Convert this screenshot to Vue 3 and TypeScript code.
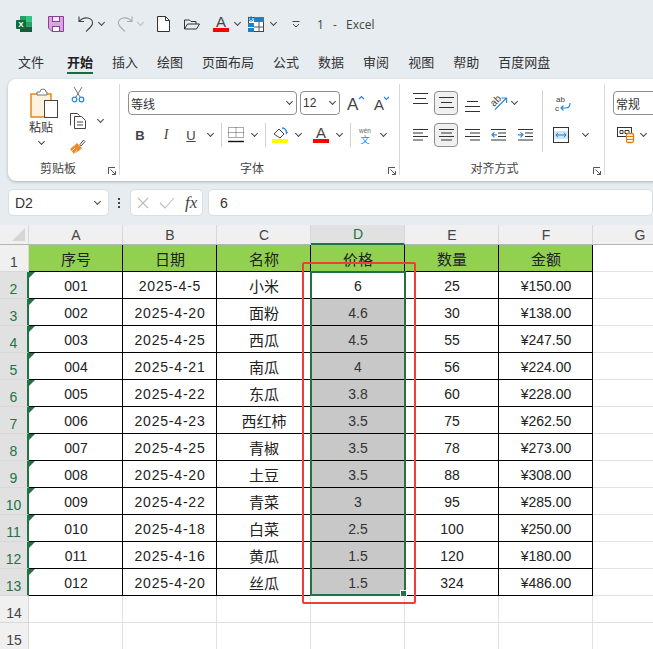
<script setup lang="ts">
interface Row {
  no: string
  date: string
  name: string
  price: string
  qty: string
  total: string
}

const columns = ['A', 'B', 'C', 'D', 'E', 'F', 'G']
const titles = ['序号', '日期', '名称', '价格', '数量', '金额']

const rows: Row[] = [
  { no: '001', date: '2025-4-5', name: '小米', price: '6', qty: '25', total: '¥150.00' },
  { no: '002', date: '2025-4-20', name: '面粉', price: '4.6', qty: '30', total: '¥138.00' },
  { no: '003', date: '2025-4-25', name: '西瓜', price: '4.5', qty: '55', total: '¥247.50' },
  { no: '004', date: '2025-4-21', name: '南瓜', price: '4', qty: '56', total: '¥224.00' },
  { no: '005', date: '2025-4-22', name: '东瓜', price: '3.8', qty: '60', total: '¥228.00' },
  { no: '006', date: '2025-4-23', name: '西红柿', price: '3.5', qty: '75', total: '¥262.50' },
  { no: '007', date: '2025-4-25', name: '青椒', price: '3.5', qty: '78', total: '¥273.00' },
  { no: '008', date: '2025-4-20', name: '土豆', price: '3.5', qty: '88', total: '¥308.00' },
  { no: '009', date: '2025-4-22', name: '青菜', price: '3', qty: '95', total: '¥285.00' },
  { no: '010', date: '2025-4-18', name: '白菜', price: '2.5', qty: '100', total: '¥250.00' },
  { no: '011', date: '2025-4-16', name: '黄瓜', price: '1.5', qty: '120', total: '¥180.00' },
  { no: '012', date: '2025-4-20', name: '丝瓜', price: '1.5', qty: '324', total: '¥486.00' },
]

const tabs = ['文件', '开始', '插入', '绘图', '页面布局', '公式', '数据', '审阅', '视图', '帮助', '百度网盘']
</script>

<template>
  <div class="app">
    <!-- 快速访问工具栏 -->
    <header class="qat">
      <svg class="i16" viewBox="0 0 16 16">
        <rect x="4" y="0" width="6" height="5.4" fill="#21a366" />
        <rect x="10" y="0" width="6" height="5.4" fill="#33c481" />
        <rect x="4" y="5.4" width="6" height="5.3" fill="#107c41" />
        <rect x="10" y="5.4" width="6" height="5.3" fill="#21a366" />
        <rect x="4" y="10.7" width="12" height="5.3" fill="#185c37" />
        <rect x="0" y="4" width="10" height="9" rx="1" fill="#0f6b3a" />
        <text x="5" y="11.2" text-anchor="middle" class="logo-x">X</text>
      </svg>
      <svg class="i16 ml16" viewBox="0 0 16 16">
        <path d="M.5.5h15v15H4L.5 12z" fill="#d9a5de" stroke="#8c3f98" />
        <rect x="4.5" y=".5" width="7" height="5" fill="#f6e8f7" stroke="#8c3f98" />
        <rect x="4.5" y="10.5" width="7" height="5" fill="#fff" stroke="#8c3f98" />
      </svg>
      <svg class="i16 ml14" viewBox="0 0 16 16" fill="none" stroke="#444" stroke-width="1.1">
        <path d="M1 .5v5h5M1 5.5C3.5 2.5 6.5 1.5 10 2c3.5.7 5.2 3.4 4.4 6-.7 2.4-3.400 4.800-6.400 7.500" />
      </svg>
      <i class="chev ml3"></i>
      <svg class="i16 ml12" viewBox="0 0 16 16" fill="none" stroke="#aaa" stroke-width="1.1">
        <path d="M15 .5v5h-5M15 5.500C12.500 2.500 9.500 1.500 6 2c-3.500.7-5.200 3.400-4.400 6 .7 2.400 3.400 4.800 6.400 7.500" />
      </svg>
      <i class="chev chev-light ml3"></i>
      <svg class="doc ml13" viewBox="0 0 13 16" fill="#fff" stroke="#333">
        <path d="M.5.500h8l4 4v11H.5z" />
        <path d="M8.500.500v4h4" fill="none" />
      </svg>
      <svg class="i16 ml14" viewBox="0 0 16 16" fill="none" stroke="#333">
        <path d="M.5 13V4h5l1.500 1.500h5V8" />
        <path d="M.5 13l3-5h12l-3 5z" />
      </svg>
      <svg class="i16 ml13" viewBox="0 0 16 16">
        <text x="8" y="11" text-anchor="middle" class="glyph-a">A</text>
        <rect x="0" y="12" width="16" height="4" fill="#f00" />
      </svg>
      <i class="chev ml4"></i>
      <svg class="i16 ml7" viewBox="0 0 16 16">
        <rect x=".5" y="1.500" width="15" height="14" fill="#fff" stroke="#444" />
        <rect x="0" y="7" width="6" height="9" fill="#1f7fc4" />
        <rect x="6" y="1" width="10" height="5" fill="#1f7fc4" />
        <path d="M6 11h10M11 6v10" stroke="#555" />
        <path d="M0 11.500h6" stroke="#fff" />
        <path d="M3 0v6M0 3h6M.8 .8l4.400 4.400M5.200 .8L.8 5.200" stroke="#1f7fc4" stroke-width=".9" />
      </svg>
      <i class="chev ml5"></i>
      <svg class="qat-more" viewBox="0 0 8 8" fill="none" stroke="#444">
        <path d="M.5 1.500h7M1 4l3 3 3-3" />
      </svg>
      <span class="doc-title">1 - Excel</span>
    </header>

    <nav class="tabs">
      <span v-for="tab in tabs" :key="tab" class="tab" :class="{ active: tab === '开始' }">{{ tab }}</span>
    </nav>

    <!-- 功能区 -->
    <section class="ribbon">
      <div class="group clip">
        <div class="clip-body">
          <div class="paste">
            <svg class="paste-icon" viewBox="0 0 28 32">
              <path d="M1 7h20v23H1z" fill="#fdf2df" stroke="#e38a16" stroke-width="1.500" />
              <path d="M7 7V5h3a3 3 0 0 1 6 0h1v3H7z" fill="#fff" stroke="#777" />
              <rect x="14.500" y="13.500" width="13" height="17" fill="#fff" stroke="#444" />
            </svg>
            <span class="paste-label">粘贴</span>
            <i class="chev"></i>
          </div>
          <div class="clip-tools">
            <svg class="i16" viewBox="0 0 16 16" fill="none">
              <path d="M4 0l6 10M12 0L6 10" stroke="#777" />
              <circle cx="4.500" cy="12.500" r="2.300" stroke="#2b88d8" stroke-width="1.200" />
              <circle cx="11.500" cy="12.500" r="2.300" stroke="#2b88d8" stroke-width="1.200" />
            </svg>
            <div class="copy-row">
              <svg class="i16" viewBox="0 0 16 16" fill="#fff" stroke="#444">
                <path d="M.5 12.500V.5h7l2 2" />
                <path d="M4.500 3.500h7l4 4v8h-11z" />
                <path d="M7 9h6M7 12h6" />
              </svg>
              <i class="chev ml10"></i>
            </div>
            <svg class="i16" viewBox="0 0 16 16">
              <path d="M10 5.500l3.500-4.500 1.500 1.500-4 4.500z" fill="#fff" stroke="#555" />
              <path d="M7 4l5 5-2 2-6 4-4-5 5-4z" fill="#ed8a2a" />
              <path d="M4 15l3-4M1.500 12.500L5 9" stroke="#fff" stroke-width=".7" />
            </svg>
          </div>
        </div>
        <footer class="group-foot">
          <span class="group-name">剪贴板</span>
          <svg class="launcher" viewBox="0 0 8 8" fill="none" stroke="#555">
            <path d="M.5 7V.5H7M2.500 2.500l5 5M4 7.500h3.500V4" />
          </svg>
        </footer>
      </div>

      <div class="group font-group">
        <div class="tool-row">
          <div class="select font-name"><span>等线</span><i class="chev"></i></div>
          <div class="select font-size ml3"><span>12</span><i class="chev"></i></div>
          <svg class="grow-icon ml7" viewBox="0 0 18 16">
            <text x="0" y="15" class="glyph-grow">A</text>
            <path d="M12 4l2.500-2.500L17 4" fill="none" stroke="#2b88d8" stroke-width="1.200" />
          </svg>
          <svg class="grow-icon ml9" viewBox="0 0 18 16">
            <text x="0" y="15" class="glyph-shrink">A</text>
            <path d="M10 2l2.500 2.500L15 2" fill="none" stroke="#2b88d8" stroke-width="1.200" />
          </svg>
        </div>
        <div class="tool-row row-two">
          <span class="fmt fmt-b ml6">B</span>
          <span class="fmt fmt-i ml14">I</span>
          <span class="fmt fmt-u ml13">U</span>
          <i class="chev ml9"></i>
          <span class="vline ml7"></span>
          <svg class="i16 ml6" viewBox="0 0 16 16" fill="none" stroke="#555">
            <path d="M.5.500h15v10H.5zM8 .5v10M.5 5.500h15" stroke-dasharray="1 1" />
            <path d="M0 14.500h16" stroke="#111" stroke-width="1.400" />
          </svg>
          <i class="chev ml6"></i>
          <span class="vline ml7"></span>
          <svg class="i16 ml6" viewBox="0 0 16 16">
            <path d="M2 7l5-5 5 5-4 4z" fill="#fff" stroke="#444" />
            <path d="M10 1c3 0 4.500 2 4.500 5l1-1" fill="none" stroke="#2b88d8" stroke-width="1.400" />
            <rect x="0" y="12" width="16" height="4" fill="#ff0" />
          </svg>
          <i class="chev ml6"></i>
          <svg class="i16 ml11" viewBox="0 0 16 16">
            <text x="8" y="11" text-anchor="middle" class="glyph-a">A</text>
            <rect x="0" y="12" width="16" height="4" fill="#f00" />
          </svg>
          <i class="chev ml6"></i>
          <span class="vline ml7"></span>
          <svg class="wen ml7" viewBox="0 0 14 16">
            <text x="7" y="5.500" text-anchor="middle" class="glyph-wen">wén</text>
            <text x="7" y="16" text-anchor="middle" class="glyph-wenzi">文</text>
          </svg>
          <i class="chev ml7"></i>
        </div>
        <footer class="group-foot">
          <span class="group-name">字体</span>
          <svg class="launcher" viewBox="0 0 8 8" fill="none" stroke="#555">
            <path d="M.5 7V.5H7M2.500 2.500l5 5M4 7.500h3.500V4" />
          </svg>
        </footer>
      </div>

      <div class="group align-group">
        <div class="tool-row">
          <svg class="lines lines-top" viewBox="0 0 15 12" stroke="#333"><path d="M0 .5h15M2 5.500h11M0 10.500h15" /></svg>
          <span class="pressed ml6">
            <svg class="lines" viewBox="0 0 15 12" stroke="#333"><path d="M0 .5h15M2 5.500h11M0 10.500h15" /></svg>
          </span>
          <svg class="lines lines-bottom ml7" viewBox="0 0 15 12" stroke="#333"><path d="M2 .5h11M0 5.500h15M0 10.500h15" /></svg>
          <svg class="orient ml10" viewBox="0 0 18 18" fill="none">
            <path d="M5 15.500L16 4.500M11.500 4H16.500V9" stroke="#2b88d8" stroke-width="1.100" />
            <text x="4" y="13" transform="rotate(-45 4 13)" class="glyph-orient">ab</text>
          </svg>
          <i class="chev ml2"></i>
          <span class="vline vline-tall ml24"></span>
          <svg class="wrap ml12" viewBox="0 0 16 16" fill="none">
            <text x="1" y="6.500" class="glyph-wrap">ab</text>
            <text x="0" y="16" class="glyph-wrap">c</text>
            <path d="M15 8c0 3-1.500 5-4 5H6M8.500 10.500L6 13l2.500 2.500" stroke="#2b88d8" stroke-width="1.200" />
          </svg>
        </div>
        <div class="tool-row row-two">
          <svg class="lines" viewBox="0 0 15 12" stroke="#333"><path d="M0 .5h15M0 4h10M0 7.500h15M0 11h10" /></svg>
          <span class="pressed ml6">
            <svg class="lines" viewBox="0 0 15 12" stroke="#333"><path d="M0 .5h15M2 4h11M0 7.500h15M2 11h11" /></svg>
          </span>
          <svg class="lines ml7" viewBox="0 0 15 12" stroke="#333"><path d="M0 .5h15M5 4h10M0 7.500h15M5 11h10" /></svg>
          <svg class="lines ml11" viewBox="0 0 15 12" fill="none" stroke="#333">
            <path d="M0 .5h15M7 4h8M7 7.500h8M0 11h15" />
            <path d="M6 5.800H1M3.500 3.300L1 5.800l2.500 2.500" stroke="#2b88d8" stroke-width="1.200" />
          </svg>
          <svg class="lines ml12" viewBox="0 0 15 12" fill="none" stroke="#333">
            <path d="M0 .5h15M7 4h8M7 7.500h8M0 11h15" />
            <path d="M0 5.800h5M2.500 3.300L5 5.800 2.500 8.300" stroke="#2b88d8" stroke-width="1.200" />
          </svg>
          <svg class="i16 ml20" viewBox="0 0 16 16" fill="none">
            <rect x=".5" y=".5" width="15" height="15" stroke="#333" />
            <rect x="1" y="4" width="14" height="8" fill="#cfe6f7" />
            <path d="M3 8h10M5 5.800L3 8l2 2.200M11 5.800L13 8l-2 2.200" stroke="#1f7fc4" />
          </svg>
          <i class="chev ml12"></i>
        </div>
        <footer class="group-foot">
          <span class="group-name">对齐方式</span>
          <svg class="launcher" viewBox="0 0 8 8" fill="none" stroke="#555">
            <path d="M.5 7V.5H7M2.500 2.500l5 5M4 7.500h3.500V4" />
          </svg>
        </footer>
      </div>

      <div class="number-group">
        <div class="select number-format"><span>常规</span></div>
        <div class="tool-row row-two">
          <svg class="cond ml4" viewBox="0 0 18 16" fill="none">
            <rect x=".5" y=".5" width="14" height="9" fill="#fff" stroke="#333" />
            <path d="M3 3.500h3v3H3zM8 3.500h4v3H8z" stroke="#333" />
            <rect x="9.500" y="6.500" width="7" height="9" rx="1.500" fill="#fff" stroke="#e07b16" stroke-width="1.300" />
            <path d="M9.500 9.500h7M9.500 12.500h7" stroke="#e07b16" />
          </svg>
          <i class="chev ml4"></i>
        </div>
      </div>
    </section>

    <!-- 编辑栏 -->
    <section class="formula-bar">
      <div class="fbox name-box"><span>D2</span><i class="chev"></i></div>
      <span class="dots"><b></b><b></b><b></b></span>
      <div class="fbox fx-box">
        <svg class="fx-x" viewBox="0 0 12 12" fill="none" stroke="#bbb" stroke-width="1.100"><path d="M1 1l10 10M11 1L1 11" /></svg>
        <svg class="fx-check" viewBox="0 0 16 12" fill="none" stroke="#bbb" stroke-width="1.100"><path d="M1 6l5 5 9-10" /></svg>
        <span class="fx-text">fx</span>
      </div>
      <div class="fbox value-box">6</div>
    </section>

    <!-- 工作表 -->
    <section class="sheet">
      <div class="grid">
        <div class="corner">
          <svg class="corner-mark" viewBox="0 0 13 13"><path d="M13 0v13H0z" fill="#d6d6d6" /></svg>
        </div>
        <div v-for="col in columns" :key="col" class="col-head" :class="{ on: col === 'D' }">{{ col }}</div>

        <div class="row-head">1</div>
        <div v-for="title in titles" :key="title" class="cell title">{{ title }}</div>
        <div class="cell"></div>

        <template v-for="(row, i) in rows" :key="row.no">
          <div class="row-head on">{{ i + 2 }}</div>
          <div class="cell solid mark">{{ row.no }}</div>
          <div class="cell solid date">{{ row.date }}</div>
          <div class="cell solid cjk">{{ row.name }}</div>
          <div class="cell solid" :class="{ picked: i > 0 }">{{ row.price }}</div>
          <div class="cell solid">{{ row.qty }}</div>
          <div class="cell solid">{{ row.total }}</div>
          <div class="cell"></div>
        </template>

        <template v-for="n in [14, 15]" :key="n">
          <div class="row-head">{{ n }}</div>
          <div v-for="col in columns" :key="col" class="cell"></div>
        </template>
      </div>

      <div class="selection"><span class="handle"></span></div>
      <div class="red-box"></div>
    </section>
  </div>
</template>

<style>
html,
body {
  margin: 0;
  overflow: hidden;
}
</style>

<style scoped>
.app {
  width: 653px;
  height: 649px;
  overflow: hidden;
  background: #e6ecf0;
  color: #333;
  font-family: "Liberation Sans", "Noto Sans CJK SC", sans-serif;
  font-size: 13px;
}

svg {
  display: block;
  flex: none;
  overflow: visible;
}

.i16 { width: 16px; height: 16px; }
.doc { width: 13px; height: 16px; }
.ml2 { margin-left: 2px; }
.ml3 { margin-left: 3px; }
.ml4 { margin-left: 4px; }
.ml5 { margin-left: 5px; }
.ml6 { margin-left: 6px; }
.ml7 { margin-left: 7px; }
.ml9 { margin-left: 9px; }
.ml10 { margin-left: 10px; }
.ml11 { margin-left: 11px; }
.ml12 { margin-left: 12px; }
.ml13 { margin-left: 13px; }
.ml14 { margin-left: 14px; }
.ml16 { margin-left: 16px; }
.ml20 { margin-left: 20px; }
.ml24 { margin-left: 24px; }

.chev {
  display: block;
  flex: none;
  width: 8px;
  height: 6px;
}

.chev::before {
  content: "";
  display: block;
  width: 4px;
  height: 4px;
  margin-left: 1.500px;
  border-right: 1.200px solid #444;
  border-bottom: 1.200px solid #444;
  transform: translateY(-1px) rotate(45deg);
}

.chev-light::before {
  border-color: #bbb;
}

.qat {
  display: flex;
  align-items: center;
  height: 48px;
  padding-left: 16px;
  box-sizing: border-box;
}

.logo-x {
  font: bold 8px "Liberation Sans", sans-serif;
  fill: #fff;
}

.glyph-a {
  font: 15px "Liberation Sans", sans-serif;
  fill: #444;
}

.qat-more {
  width: 8px;
  height: 8px;
  margin-left: 15px;
}

.doc-title {
  margin-left: 17px;
  font-family: "Open Sans", sans-serif;
  font-size: 12px;
  word-spacing: 6px;
  color: #444;
}

.tabs {
  display: flex;
  gap: 19px;
  height: 31px;
  padding-left: 18px;
}

.tab {
  position: relative;
  height: 28px;
  line-height: 30px;
  color: #333;
}

.tab.active {
  margin-left: 4px;
  font-weight: 700;
  color: #222;
}

.tab.active::after {
  content: "";
  position: absolute;
  left: 0;
  right: 0;
  bottom: 2px;
  height: 2px;
  background: #1a6b3c;
}

.ribbon {
  display: flex;
  width: 700px;
  height: 102px;
  margin-left: 8px;
  background: #fff;
  border-radius: 8px;
  box-shadow: 0 1px 3px rgba(0, 0, 0, 0.25);
}

.group {
  display: flex;
  flex-direction: column;
  box-sizing: border-box;
  height: 91px;
  margin-top: 5px;
  border-right: 1px solid #d8d8d8;
}

.clip {
  width: 112px;
}

.clip-body {
  display: flex;
  height: 73px;
}

.paste {
  display: flex;
  flex-direction: column;
  align-items: center;
  width: 48px;
  margin-left: 9px;
}

.paste-icon {
  width: 28px;
  height: 32px;
  margin: 3px 0 0 6px;
}

.paste-label {
  line-height: 19px;
  font-size: 12px;
  color: #333;
}

.paste .chev {
  margin-top: 2px;
}

.clip-tools {
  display: flex;
  flex-direction: column;
  gap: 10px;
  margin-left: 5px;
  padding-top: 3px;
}

.copy-row {
  display: flex;
  align-items: center;
}

.group-foot {
  display: flex;
  align-items: center;
  height: 18px;
  margin-top: auto;
  margin-bottom: -3px;
  padding-right: 3px;
}

.group-name {
  flex: 1;
  margin-right: 4px;
  text-align: center;
  font-size: 12px;
  line-height: 18px;
  color: #444;
}

.clip .group-name {
  margin-right: 0;
}

.launcher {
  width: 8px;
  height: 8px;
  margin-top: 4px;
}

.font-group {
  width: 280px;
  padding: 7px 0 0 8px;
}

.font-group .group-foot {
  margin-left: -8px;
}

.tool-row {
  display: flex;
  align-items: center;
  height: 24px;
}

.row-two {
  margin-top: 8px;
}

.select {
  display: flex;
  align-items: center;
  justify-content: space-between;
  box-sizing: border-box;
  height: 24px;
  padding: 0 3px 0 2px;
  background: #fff;
  border: 1px solid #8f8f8f;
  border-radius: 4px;
  font-size: 12px;
  color: #333;
}

.font-name {
  width: 169px;
}

.font-size {
  width: 40px;
  padding-left: 2px;
}

.grow-icon {
  width: 18px;
  height: 16px;
}

.glyph-grow {
  font: 17px "Liberation Sans", sans-serif;
  fill: #444;
}

.glyph-shrink {
  font: 15px "Liberation Sans", sans-serif;
  fill: #444;
}

.fmt {
  flex: none;
  width: 12px;
  text-align: center;
  font-size: 13px;
  color: #444;
}

.fmt-b { font-weight: 700; }
.fmt-i { font-family: "Liberation Serif", serif; font-style: italic; font-size: 14px; }
.fmt-u { text-decoration: underline; }

.vline {
  flex: none;
  width: 1px;
  height: 24px;
  background: #d0d0d0;
}

.vline-tall {
  align-self: flex-start;
  height: 62px;
  margin-top: -1px;
}

.wen {
  width: 14px;
  height: 16px;
}

.glyph-wen {
  font: 6.500px "Liberation Sans", sans-serif;
  fill: #666;
}

.glyph-wenzi {
  font: 9px "Noto Sans CJK SC", sans-serif;
  fill: #2b88d8;
}

.align-group {
  width: 205px;
  padding: 7px 0 0 13px;
}

.align-group .group-foot {
  margin-left: -13px;
}

.lines {
  flex: none;
  width: 15px;
  height: 12px;
}

.lines-top { transform: translateY(-4px); }
.lines-bottom { transform: translateY(4px); }

.pressed {
  display: flex;
  align-items: center;
  justify-content: center;
  flex: none;
  box-sizing: border-box;
  width: 24px;
  height: 24px;
  background: #f0f0f0;
  border: 1px solid #8f8f8f;
  border-radius: 4px;
}

.orient {
  width: 18px;
  height: 18px;
}

.glyph-orient {
  font: 10px "Liberation Sans", sans-serif;
  fill: #444;
}

.wrap {
  width: 16px;
  height: 16px;
}

.glyph-wrap {
  font: 8px "Liberation Sans", sans-serif;
  fill: #444;
}

.number-group {
  padding: 12px 0 0 8px;
}

.number-format {
  width: 90px;
}

.cond {
  width: 18px;
  height: 16px;
}

.formula-bar {
  display: flex;
  align-items: center;
  height: 27px;
  margin: 8px 0 9px 8px;
}

.fbox {
  display: flex;
  align-items: center;
  box-sizing: border-box;
  height: 27px;
  background: #fff;
  border: 1px solid #d9dee2;
  border-radius: 5px;
  font-size: 14px;
  color: #333;
}

.name-box {
  justify-content: space-between;
  width: 101px;
  padding: 0 7px 0 6px;
}

.dots {
  display: flex;
  flex-direction: column;
  gap: 2px;
  width: 2px;
  margin: 0 10px 0 9px;
}

.dots b {
  width: 2px;
  height: 2px;
  background: #444;
}

.fx-box {
  width: 73px;
  padding-left: 6px;
  gap: 10px;
}

.fx-x {
  width: 12px;
  height: 12px;
}

.fx-check {
  width: 16px;
  height: 12px;
}

.fx-text {
  font-family: "Liberation Serif", serif;
  font-style: italic;
  font-size: 17px;
  color: #444;
}

.value-box {
  flex: 1;
  margin-left: 5px;
  padding-left: 11px;
}

.sheet {
  position: relative;
  overflow: hidden;
  height: 424px;
  background: #fff;
}

.grid {
  display: grid;
  grid-template-columns: 29px repeat(7, 94px);
  grid-template-rows: 20px repeat(15, 27px);
  width: 687px;
  color: #222;
  font-size: 14px;
}

.corner {
  display: flex;
  align-items: flex-end;
  justify-content: flex-end;
  box-sizing: border-box;
  padding: 0 3px 3px 0;
  background: #f0f0f0;
  border-bottom: 1px solid #b5b5b5;
  border-right: 1px solid #d8d8d8;
}

.corner-mark {
  width: 13px;
  height: 13px;
}

.col-head {
  box-sizing: border-box;
  display: flex;
  align-items: center;
  justify-content: center;
  padding-left: 1px;
  background: #f0f0f0;
  border-right: 1px solid #d8d8d8;
  border-bottom: 1px solid #b5b5b5;
  color: #444;
}

.col-head.on {
  background: #e1e1e1;
  border-bottom: 2px solid #217346;
  color: #217346;
}

.row-head {
  box-sizing: border-box;
  display: flex;
  align-items: flex-end;
  justify-content: center;
  padding-bottom: 1px;
  background: #f0f0f0;
  border-right: 1px solid #d8d8d8;
  border-bottom: 1px solid #d8d8d8;
  color: #444;
}

.row-head.on {
  background: #e1e1e1;
  border-right: 2px solid #217346;
  color: #217346;
}

.cell {
  position: relative;
  box-sizing: border-box;
  display: flex;
  align-items: center;
  justify-content: center;
  padding: 1px 0 0 1px;
  border-right: 1px solid #e1e1e1;
  border-bottom: 1px solid #e1e1e1;
}

.cell.solid {
  border-color: #000;
}

.cell.title {
  background: #92d050;
  border-color: #000;
  font-size: 15px;
}

.cell.cjk {
  font-size: 15px;
}

.cell.date {
  letter-spacing: 0.800px;
}

.cell.picked {
  background: #c8c8c8;
  color: #333;
}

.cell.mark::before {
  content: "";
  position: absolute;
  top: 0;
  left: 0;
  border-top: 6px solid #217346;
  border-right: 6px solid transparent;
}

.selection {
  position: absolute;
  left: 310px;
  top: 46px;
  box-sizing: border-box;
  width: 96px;
  height: 325px;
  border: 2px solid #217346;
}

.handle {
  position: absolute;
  right: -3px;
  bottom: -3px;
  box-sizing: border-box;
  width: 7px;
  height: 7px;
  background: #217346;
  border: 1px solid #fff;
}

.red-box {
  position: absolute;
  left: 302px;
  top: 37px;
  box-sizing: border-box;
  width: 114px;
  height: 342px;
  border: 2px solid #f23b3b;
  border-radius: 2px;
}
</style>
